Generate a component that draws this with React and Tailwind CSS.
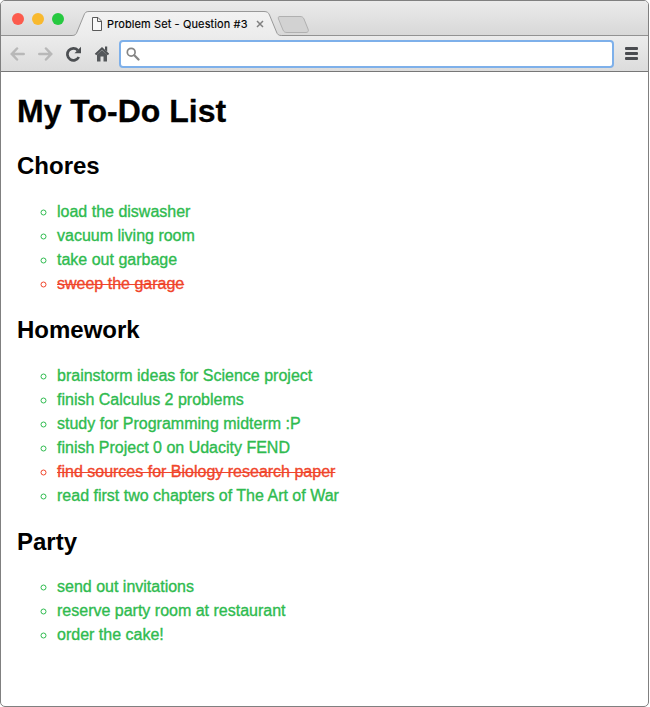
import React from "react";

const lists = [
  {
    title: "Chores",
    items: [
      ["load the diswasher"],
      ["vacuum living room"],
      ["take out garbage"],
      ["sweep the garage", true],
    ],
  },
  {
    title: "Homework",
    items: [
      ["brainstorm ideas for Science project"],
      ["finish Calculus 2 problems"],
      ["study for Programming midterm :P"],
      ["finish Project 0 on Udacity FEND"],
      ["find sources for Biology research paper", true],
      ["read first two chapters of The Art of War"],
    ],
  },
  {
    title: "Party",
    items: [
      ["send out invitations"],
      ["reserve party room at restaurant"],
      ["order the cake!"],
    ],
  },
];

function TabStrip() {
  return (
    <div className="flex h-[35px] border-b border-[#929292] bg-linear-to-b from-[#ebebeb] to-[#d8d8d8]">
      <div className="flex gap-2 pt-3 pl-[11px]">
        <span className="size-3 rounded-full bg-[#fc5b4d]" />
        <span className="size-3 rounded-full bg-[#f8b92e]" />
        <span className="size-3 rounded-full bg-[#26c940]" />
      </div>
      <div className="relative ml-2 h-[35px] w-[210px] shrink-0">
        <svg className="absolute inset-0" width="210" height="35" viewBox="0 0 210 35">
          <defs>
            <linearGradient id="tab" x1="0" y1="0" x2="0" y2="1">
              <stop offset="0" stopColor="#f2f2f2" />
              <stop offset="1" stopColor="#ececec" />
            </linearGradient>
          </defs>
          <path
            d="M0 34.500C3 34.500 4 33.500 5 31L12 14C13 11.500 14 10.500 17 10.500H192C195 10.500 196.500 11.500 197.500 14L204.500 31C205.500 33.500 206.500 34.500 209.500 34.500V35H0Z"
            fill="url(#tab)"
          />
          <path
            d="M0 34.500C3 34.500 4 33.500 5 31L12 14C13 11.500 14 10.500 17 10.500H192C195 10.500 196.500 11.500 197.500 14L204.500 31C205.500 33.500 206.500 34.500 209.500 34.500"
            fill="none"
            stroke="#999"
          />
        </svg>
        <div className="relative flex h-full items-center pt-[11px] pl-5">
          <svg width="10" height="14" viewBox="0 0 10 14" fill="#f8f8f8" stroke="#5a5a5a">
            <path d="M.5 .5H6L9.500 4V13.500H.5ZM5.500 .5V4.500H9.500" />
          </svg>
          <span className="ml-[5px] w-[141px] whitespace-nowrap font-[Inter,sans-serif] text-[11px] leading-[14px] tracking-[0.11px] text-black [-webkit-text-stroke:0.15px_black]">
            Problem Set - Question #3
          </span>
          <svg className="ml-[8px]" width="8" height="8" viewBox="0 0 8 8" stroke="#808080" strokeWidth="1.5">
            <path d="M1 1L7 7M7 1L1 7" />
          </svg>
        </div>
      </div>
      <svg className="-ml-[5px] mt-[15px]" width="34" height="18" viewBox="0 0 34 18">
        <path
          d="M3 .5H23C25 .5 26 1 27 3L31 13C32 15 31 16.500 29 16.500H10C8 16.500 7 16 6 14L1.500 3C1 1.500 1 .5 3 .5Z"
          fill="#d2d2d2"
          stroke="#b0b0b0"
        />
      </svg>
    </div>
  );
}

function Toolbar() {
  return (
    <div className="flex h-9 items-center border-b border-[#777] bg-linear-to-b from-[#ececec] to-[#dcdcdc] pl-[9px]">
      <svg width="15" height="14" viewBox="0 0 15 14" fill="none" stroke="#b8b8b8" strokeWidth="2.5" strokeLinecap="round">
        <path d="M7 1.500L1.800 7L7 12.500M2.500 7H13.700" />
      </svg>
      <svg className="ml-[13px]" width="15" height="14" viewBox="0 0 15 14" fill="none" stroke="#b8b8b8" strokeWidth="2.500" strokeLinecap="round">
        <path d="M8 1.500L13.200 7L8 12.500M12.500 7H1.300" />
      </svg>
      <svg className="ml-3" width="17" height="16" viewBox="0 0 17 16">
        <path d="M12.800 4.200A6 6 0 1 0 13.800 11" fill="none" stroke="#4c4f52" strokeWidth="2.700" />
        <path d="M16 .8V7.200H9.500Z" fill="#4c4f52" />
      </svg>
      <svg className="ml-3" width="16" height="16" viewBox="0 0 16 16">
        <path d="M8 4L13 8.500V15.500H9.500V10.500H6.500V15.500H3V8.500Z" fill="#55585b" />
        <path d="M1.500 8.500L8 2.300L14.500 8.500" fill="none" stroke="#4c4f52" strokeWidth="2" />
        <path d="M11 .6H13.200V5.800L11 3.700Z" fill="#4c4f52" />
      </svg>
      <div className="mt-px ml-[9px] flex h-7 w-[495px] items-center rounded-[4px] border-2 border-[#7eb0ea] bg-white pl-[5px]">
        <svg width="14" height="14" viewBox="0 0 14 14" fill="none" stroke="#858585">
          <circle cx="5.200" cy="5.200" r="3.900" strokeWidth="1.700" />
          <path d="M8.300 8.300L12.500 12.500" strokeWidth="2.300" strokeLinecap="round" />
        </svg>
      </div>
      <div className="ml-[11px] flex w-[13px] flex-col gap-[2px]">
        <span className="h-[3px] rounded-[1px] bg-[#4a4c50]" />
        <span className="h-[3px] rounded-[1px] bg-[#4a4c50]" />
        <span className="h-[3px] rounded-[1px] bg-[#4a4c50]" />
      </div>
    </div>
  );
}

export default function App() {
  return (
    <div className="h-[707px] bg-white">
      <div className="h-[707px] w-[649px] overflow-hidden rounded-[5px] border border-[#808080] bg-white">
        <TabStrip />
        <Toolbar />
        <main className="px-4 pt-[21px] font-['Liberation_Sans',Arial,sans-serif]">
          <h1 className="mb-[22.400px] text-[32px] leading-[37px] font-bold text-black [-webkit-text-stroke:0.3px_black]">
            My To-Do List
          </h1>
          {lists.map(({ title, items }) => (
            <section key={title}>
              <h2 className="my-[19.800px] text-2xl leading-[28px] font-bold text-black">{title}</h2>
              <ul className="list-[circle] pl-10 text-base leading-6 [-webkit-text-stroke:0.35px_currentColor]">
                {items.map(([text, done]) => (
                  <li key={text} className={done ? "text-[#f0452b] line-through" : "text-[#2fbb4f]"}>
                    {text}
                  </li>
                ))}
              </ul>
            </section>
          ))}
        </main>
      </div>
    </div>
  );
}
